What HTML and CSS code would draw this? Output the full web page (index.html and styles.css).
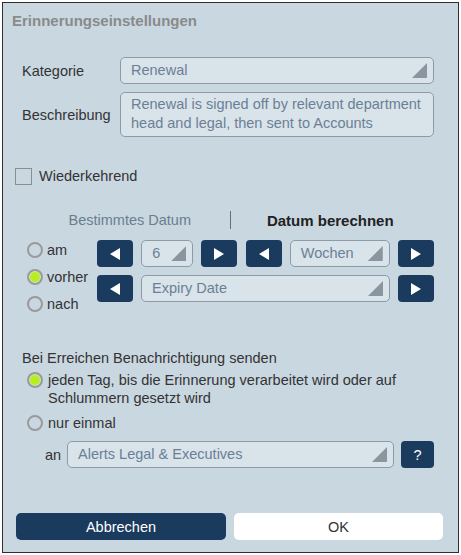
FILE: index.html
```html
<!DOCTYPE html>
<html lang="de">
<head>
<meta charset="utf-8">
<title>Erinnerungseinstellungen</title>
<link rel="stylesheet" href="styles.css">
</head>
<body>
<div class="dialog">
  <div class="title">Erinnerungseinstellungen</div>

  <div class="form">
    <div class="field-row">
      <span class="field-label">Kategorie</span>
      <div class="select grow">Renewal</div>
    </div>
    <div class="field-row">
      <span class="field-label">Beschreibung</span>
      <div class="textarea">Renewal is signed off by relevant department head and legal, then sent to Accounts</div>
    </div>
  </div>

  <div class="check-row">
    <span class="checkbox"></span>
    <span class="check-label">Wiederkehrend</span>
  </div>

  <div class="tabs">
    <span class="tab">Bestimmtes Datum</span>
    <span class="tab-divider"></span>
    <span class="tab active">Datum berechnen</span>
  </div>

  <div class="date-section">
    <div class="radios">
      <div class="radio-row"><span class="radio"></span><span>am</span></div>
      <div class="radio-row"><span class="radio checked"></span><span>vorher</span></div>
      <div class="radio-row"><span class="radio"></span><span>nach</span></div>
    </div>
    <div class="controls">
      <div class="ctrl-row">
        <span class="btn-nav"><svg width="10" height="12" viewBox="0 0 10 12"><path d="M0 6L10 0V12Z" fill="#fff"/></svg></span>
        <div class="select sel-num">6</div>
        <span class="btn-nav"><svg width="10" height="12" viewBox="0 0 10 12"><path d="M10 6L0 0V12Z" fill="#fff"/></svg></span>
        <span class="btn-nav"><svg width="10" height="12" viewBox="0 0 10 12"><path d="M0 6L10 0V12Z" fill="#fff"/></svg></span>
        <div class="select sel-unit">Wochen</div>
        <span class="btn-nav"><svg width="10" height="12" viewBox="0 0 10 12"><path d="M10 6L0 0V12Z" fill="#fff"/></svg></span>
      </div>
      <div class="ctrl-row">
        <span class="btn-nav"><svg width="10" height="12" viewBox="0 0 10 12"><path d="M0 6L10 0V12Z" fill="#fff"/></svg></span>
        <div class="select sel-field">Expiry Date</div>
        <span class="btn-nav"><svg width="10" height="12" viewBox="0 0 10 12"><path d="M10 6L0 0V12Z" fill="#fff"/></svg></span>
      </div>
    </div>
  </div>

  <div class="notify">
    <div class="notify-title">Bei Erreichen Benachrichtigung senden</div>
    <div class="notify-option first">
      <span class="radio checked"></span>
      <span class="notify-text">jeden Tag, bis die Erinnerung verarbeitet wird oder auf Schlummern gesetzt wird</span>
    </div>
    <div class="notify-option second">
      <span class="radio"></span>
      <span class="notify-text">nur einmal</span>
    </div>
    <div class="an-row">
      <span class="an-label">an</span>
      <div class="select sel-recipients">Alerts Legal &amp; Executives</div>
      <span class="btn-help">?</span>
    </div>
  </div>

  <div class="footer">
    <button class="btn btn-cancel">Abbrechen</button>
    <button class="btn btn-ok">OK</button>
  </div>
</div>
</body>
</html>
```
FILE: styles.css
```css
body {
  margin: 0;
  background: #ffffff;
  font-family: "Liberation Sans", Arial, sans-serif;
  font-size: 14.5px;
  color: #333333;
}

.dialog {
  box-sizing: border-box;
  width: 457px;
  height: 551px;
  margin: 2px 0 0 2px;
  border: 1px solid #2e2e2e;
  background: #c9d7e1;
  display: flex;
  flex-direction: column;
}

.title {
  margin: 9px 0 0 9px;
  font-weight: bold;
  font-size: 15px;
  color: #8a8a8a;
  line-height: 17px;
}

.form {
  margin: 28px 0 0 19px;
  width: 412px;
  display: flex;
  flex-direction: column;
  gap: 8px;
}

.field-row {
  display: flex;
  align-items: center;
}

.field-label {
  width: 98px;
  flex: none;
}

.select {
  position: relative;
  box-sizing: border-box;
  height: 27px;
  border: 1px solid #8c9ba7;
  border-radius: 5px;
  background: #d9e3ea;
  color: #6b8095;
  padding: 0 10px;
  line-height: 25px;
  white-space: nowrap;
}

.select::after {
  content: "";
  position: absolute;
  right: 6px;
  top: 5px;
  width: 15px;
  height: 15px;
  background: #8a969f;
  clip-path: polygon(100% 0, 100% 100%, 0 100%);
}

.grow {
  flex: 1;
}

.textarea {
  flex: 1;
  box-sizing: border-box;
  height: 45px;
  border: 1px solid #8c9ba7;
  border-radius: 5px;
  background: #d9e3ea;
  color: #6b8095;
  padding: 2px 4px 2px 10px;
  line-height: 19px;
}

.check-row {
  margin: 30px 0 0 12px;
  display: flex;
  align-items: center;
  height: 18px;
}

.checkbox {
  box-sizing: border-box;
  width: 17px;
  height: 17px;
  border: 1px solid #8d8d8d;
}

.check-label {
  margin-left: 7px;
}

.tabs {
  margin: 25px 0 0 27px;
  width: 400px;
  height: 20px;
  display: flex;
  align-items: center;
}

.tab {
  flex: 1;
  text-align: center;
  color: #6b7d8f;
}

.tab.active {
  font-weight: bold;
  font-size: 15px;
  color: #222222;
}

.tab-divider {
  width: 1px;
  height: 18px;
  background: #5d7083;
}

.date-section {
  margin: 6px 0 0 24px;
  display: flex;
}

.radios {
  width: 70px;
  flex: none;
}

.radio-row {
  display: flex;
  align-items: center;
  height: 27px;
  gap: 4px;
}

.radio {
  box-sizing: border-box;
  width: 16px;
  height: 16px;
  flex: none;
  border: 2px solid #9a9a9a;
  border-radius: 50%;
}

.radio.checked {
  background: #b6ef1d;
  box-shadow: inset 0 0 0 1px #d3dde3;
}

.controls {
  margin-top: 4px;
  width: 337px;
  display: flex;
  flex-direction: column;
  gap: 8px;
}

.ctrl-row {
  display: flex;
  justify-content: space-between;
}

.btn-nav {
  width: 36px;
  height: 27px;
  flex: none;
  border-radius: 4px;
  background: #1a3a5e;
  display: flex;
  align-items: center;
  justify-content: center;
}

.sel-num {
  width: 52px;
}

.sel-unit {
  width: 100px;
}

.sel-field {
  flex: 1;
  margin: 0 8px;
}

.notify {
  margin: 32px 0 0 19px;
}

.notify-title {
  line-height: 18px;
}

.notify-option {
  display: flex;
  align-items: flex-start;
  margin-left: 5px;
  gap: 5px;
  line-height: 18px;
}

.notify-option .radio {
  margin-top: 1px;
}

.notify-option.first {
  margin-top: 4px;
}

.notify-option.second {
  margin-top: 7px;
}

.notify-text {
  width: 385px;
}

.an-row {
  margin: 9px 0 0 23px;
  display: flex;
  align-items: center;
}

.an-label {
  width: 22px;
}

.sel-recipients {
  width: 327px;
}

.btn-help {
  margin-left: 7px;
  width: 33px;
  height: 27px;
  border-radius: 4px;
  background: #1a3a5e;
  color: #ffffff;
  display: flex;
  align-items: center;
  justify-content: center;
}

.footer {
  margin-top: auto;
  padding: 0 0 12px 13px;
  display: flex;
  gap: 8px;
}

.btn {
  height: 27px;
  border: none;
  border-radius: 5px;
  font-family: "Liberation Sans", Arial, sans-serif;
  font-size: 14.5px;
  padding: 0;
}

.btn-cancel {
  width: 210px;
  background: #1a3a5e;
  color: #ffffff;
}

.btn-ok {
  width: 209px;
  background: #ffffff;
  color: #333333;
}
```
